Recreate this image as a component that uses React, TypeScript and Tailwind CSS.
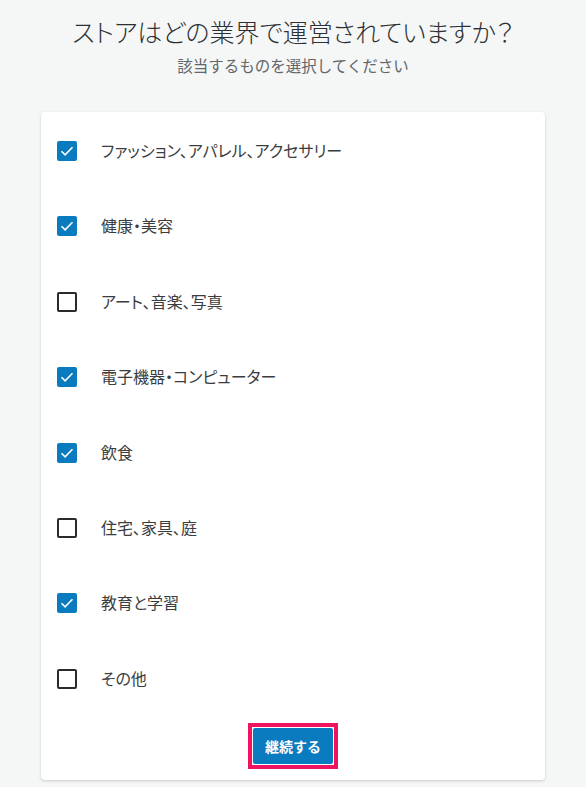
import { useState } from "react";

const items = [
  { label: "ファッション、アパレル、アクセサリー", checked: true },
  { label: "健康・美容", checked: true },
  { label: "アート、音楽、写真", checked: false },
  { label: "電子機器・コンピューター", checked: true },
  { label: "飲食", checked: true },
  { label: "住宅、家具、庭", checked: false },
  { label: "教育と学習", checked: true },
  { label: "その他", checked: false },
];

export default function App() {
  const [state, setState] = useState(items.map((i) => i.checked));

  return (
    <div
      className="min-h-[787px] bg-[#f5f6f6] text-[#333]"
      style={{ fontFamily: '"Noto Sans", "Noto Sans CJK JP", sans-serif' }}
    >
      <div className="pt-[14px] text-center">
        <h1 className="text-[25px] font-light leading-[37px] text-[#2c2f33] [font-feature-settings:'palt']">
          ストアはどの業界で運営されていますか？
        </h1>
        <p className="mt-[3px] text-[15.5px] leading-[24px] text-[#62676c]">
          該当するものを選択してください
        </p>
      </div>

      <div className="mx-[41px] mt-[34px] rounded-[4px] bg-white pb-[11px] pt-[16px] shadow-[0_1px_3px_rgba(0,0,0,0.18)]">
        <ul className="flex flex-col">
          {items.map((item, i) => (
            <li key={item.label}>
              <label className="flex h-[75.4px] cursor-pointer items-start gap-[24px] px-[16px] pt-[13px]">
                <button
                  type="button"
                  onClick={() =>
                    setState((s) => s.map((v, j) => (j === i ? !v : v)))
                  }
                  className={`flex h-[20px] w-[20px] shrink-0 items-center justify-center rounded-[2px] ${
                    state[i]
                      ? "bg-[#0a7bbf]"
                      : "border-2 border-[#2b2b2b] bg-white"
                  }`}
                >
                  {state[i] && (
                    <svg viewBox="0 0 20 20" className="h-[20px] w-[20px]">
                      <path
                        d="M4.5 10.2l3.6 3.6 7.4-7.6"
                        fill="none"
                        stroke="white"
                        strokeWidth="1.6"
                      />
                    </svg>
                  )}
                </button>
                <span className="text-[16px] leading-[20px] text-[#3a3d40] [font-feature-settings:'palt']">
                  {item.label}
                </span>
              </label>
            </li>
          ))}
        </ul>
        <div className="-mt-[8px] flex justify-center">
          <div className="border-[4px] border-[#f0135f] p-[1px]">
            <button
              type="button"
              className="h-[36px] w-[80px] rounded-[2px] bg-[#0a7bbf] text-[14px] font-bold text-white"
            >
              継続する
            </button>
          </div>
        </div>
      </div>
    </div>
  );
}
